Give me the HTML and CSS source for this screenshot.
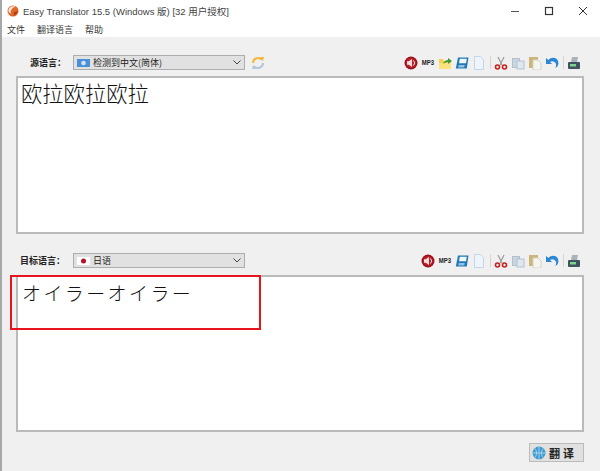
FILE: index.html
```html
<!DOCTYPE html>
<html lang="zh">
<head>
<meta charset="utf-8">
<title>Easy Translator</title>
<link rel="stylesheet" href="styles.css">
</head>
<body>
<svg class="defs" width="0" height="0">
  <symbol id="i-speaker" viewBox="0 0 14 14"><circle cx="7" cy="7" r="6.5" fill="#9c111b"/><circle cx="7" cy="7" r="5" fill="#b8202a"/><path d="M3 5.200h1.800L8 3v8L4.800 8.800H3z" fill="#f6dede"/><path d="M9.500 4.500a3.500 3.500 0 0 1 0 5" fill="none" stroke="#f6dede"/></symbol>
  <symbol id="i-folder" viewBox="0 0 14 14"><path d="M1 3h4l1 2h7v8H1z" fill="#f6cf52"/><path d="M1 7h12v6H1z" fill="#fbe27f"/><path d="M5 8c1-3 3-4 5-4V2l4 3-4 3V6C8 6 6 7 5 8z" fill="#3f9a35"/></symbol>
  <symbol id="i-save" viewBox="0 0 14 14"><path d="M3 1.500h10.500L11.800 12.500H.8z" fill="#2078b4"/><path d="M4.800 2.800h7L11 7.200H4z" fill="#f0f7fc"/><path d="M3.700 9h6l-.5 2.600H3.200z" fill="#8fc2e4"/></symbol>
  <symbol id="i-doc" viewBox="0 0 14 14"><path d="M2.500.5h6l3 3v10h-9z" fill="#eef4fb" stroke="#c4d5e8"/></symbol>
  <symbol id="i-cut" viewBox="0 0 14 14"><path d="M4 1l4 8M10 1 6 9" stroke="#9a9a9a" stroke-width="1.200"/><circle cx="3.500" cy="11" r="2" fill="none" stroke="#c8201e" stroke-width="1.600"/><circle cx="10.500" cy="11" r="2" fill="none" stroke="#c8201e" stroke-width="1.600"/></symbol>
  <symbol id="i-copy" viewBox="0 0 14 14"><rect x="1.500" y="2.500" width="7" height="9" fill="#c9d6e2" stroke="#b4c1cd"/><rect x="6" y="5" width="7" height="8" fill="#dfe7ef" stroke="#b4c1cd"/></symbol>
  <symbol id="i-paste" viewBox="0 0 14 14"><rect x="1" y="1" width="9" height="11" fill="#cdb47a"/><path d="M5 4h5l3 3v7H5z" fill="#f5f5f0" stroke="#d2d2c8"/></symbol>
  <symbol id="i-undo" viewBox="0 0 14 14"><path d="M1 2v6h6L5 6c2-1.500 5-1 6 2 .4 1.500 0 3-1 4 3-1 4-4 3-7C11.500 1 6 1 3.500 4z" fill="#2b87d3"/></symbol>
  <symbol id="i-print" viewBox="0 0 14 14"><path d="M5 1h6l-1 5H4z" fill="#a9b3ba"/><rect x="1" y="6" width="12" height="7" rx="1" fill="#3e5360"/><rect x="3" y="8" width="6" height="2.500" fill="#7fd38a"/></symbol>
</svg>
<div class="window">
  <header class="titlebar">
    <svg class="app-icon" viewBox="0 0 12 12" width="12" height="12"><circle cx="6" cy="6" r="5.500" fill="#e2672b"/><path d="M1.500 4.500C2.500 1.500 6 .5 8.500 1.500 7 2 6 2.500 5 4c-1 1-2 2.500-1 4.500C2 8 1 6 1.500 4.500z" fill="#fbe8da"/><path d="M7 7a3 3 0 0 0 3.500-2C11 8 8.500 10.500 6 10.500 7 9.500 7.500 8.500 7 7z" fill="#a93c12"/></svg>
    <span class="title">Easy Translator 15.5 (Windows 版) [32 用户授权]</span>
    <div class="caption">
      <svg width="34" height="20" viewBox="0 0 34 20"><path d="M13 10.500h8" stroke="#555"/></svg>
      <svg width="34" height="20" viewBox="0 0 34 20"><rect x="13.500" y="6.500" width="7" height="7" fill="none" stroke="#333" stroke-width="1.200"/></svg>
      <svg width="34" height="20" viewBox="0 0 34 20"><path d="M13 6l8 8M21 6l-8 8" stroke="#333"/></svg>
    </div>
  </header>
  <nav class="menubar"><span>文件</span><span>翻译语言</span><span>帮助</span></nav>
  <main class="client">
    <section class="pane pane-source">
      <div class="toolbar">
        <label class="lang-label lang-label-source">源语言：</label>
        <div class="select">
          <svg class="flag" viewBox="0 0 13 8" width="13" height="8"><rect width="13" height="8" fill="#4a90d9"/><circle cx="6.500" cy="4" r="2.300" fill="#cfe3f6"/></svg>
          <span class="select-text">检测到中文(简体)</span>
          <svg class="chev" viewBox="0 0 8 5" width="8" height="5"><path d="M.5.5 4 4 7.500.5" fill="none" stroke="#444"/></svg>
        </div>
        <svg class="swap" viewBox="0 0 14 14" width="14" height="14"><path d="M2 7a5 5 0 0 1 9-3" fill="none" stroke="#f0b93c" stroke-width="2"/><path d="M12 7a5 5 0 0 1-9 3" fill="none" stroke="#b5c6dc" stroke-width="2"/><path d="M9 1h4l-1 4z" fill="#f0b93c"/><path d="M5 13H1l1-4z" fill="#b5c6dc"/></svg>
        <div class="tools">
          <svg class="ico"><use href="#i-speaker"/></svg>
          <span class="mp3">MP3</span>
          <svg class="ico"><use href="#i-folder"/></svg>
          <svg class="ico"><use href="#i-save"/></svg>
          <svg class="ico"><use href="#i-doc"/></svg>
          <i class="sep"></i>
          <svg class="ico"><use href="#i-cut"/></svg>
          <svg class="ico"><use href="#i-copy"/></svg>
          <svg class="ico"><use href="#i-paste"/></svg>
          <svg class="ico"><use href="#i-undo"/></svg>
          <i class="sep"></i>
          <svg class="ico"><use href="#i-print"/></svg>
        </div>
      </div>
      <div class="editor editor-source">欧拉欧拉欧拉</div>
    </section>
    <section class="pane pane-target">
      <div class="toolbar">
        <label class="lang-label lang-label-target">目标语言：</label>
        <div class="select">
          <svg class="flag" viewBox="0 0 13 8" width="13" height="8"><rect width="13" height="8" fill="#fff"/><circle cx="6.500" cy="4" r="2.500" fill="#bc0f2c"/></svg>
          <span class="select-text">日语</span>
          <svg class="chev" viewBox="0 0 8 5" width="8" height="5"><path d="M.5.5 4 4 7.500.5" fill="none" stroke="#444"/></svg>
        </div>
        <div class="tools">
          <svg class="ico"><use href="#i-speaker"/></svg>
          <span class="mp3">MP3</span>
          <svg class="ico"><use href="#i-save"/></svg>
          <svg class="ico"><use href="#i-doc"/></svg>
          <i class="sep"></i>
          <svg class="ico"><use href="#i-cut"/></svg>
          <svg class="ico"><use href="#i-copy"/></svg>
          <svg class="ico"><use href="#i-paste"/></svg>
          <svg class="ico"><use href="#i-undo"/></svg>
          <i class="sep"></i>
          <svg class="ico"><use href="#i-print"/></svg>
        </div>
      </div>
      <div class="editor editor-target">
        <span class="jp">オイラーオイラー</span>
        <div class="highlight"></div>
      </div>
    </section>
    <footer class="actions">
      <button class="translate">
        <svg viewBox="0 0 14 14" width="14" height="14"><circle cx="7" cy="7" r="6.500" fill="#3f9ad0"/><path d="M.5 7h13M7 .5v13M3 2.500c2 3 2 6 0 9M11 2.500c-2 3-2 6 0 9" fill="none" stroke="#bfe0f2" stroke-width=".8"/></svg>
        <span>翻译</span>
      </button>
    </footer>
  </main>
</div>
</body>
</html>
```
FILE: styles.css
```css
* { box-sizing: border-box; }
html, body { margin: 0; height: 100%; }
body { font-family: "Noto Sans CJK SC", "Liberation Sans", sans-serif; color: #222; background: #f0f0f0; overflow: hidden; }
.defs { position: absolute; }
.window { width: 600px; height: 471px; display: flex; flex-direction: column; border-left: 2px solid #a8a8a8; background: #f0f0f0; }
.titlebar { height: 22px; background: #fff; display: flex; align-items: center; padding-left: 5px; flex: none; }
.app-icon { flex: none; }
.title { font-family: "Liberation Sans", "Noto Sans CJK SC", sans-serif; font-size: 9.5px; margin-left: 4px; color: #444; white-space: nowrap; }
.caption { margin-left: auto; display: flex; }
.menubar { height: 15px; background: #fff; display: flex; gap: 12px; padding-left: 5px; font-size: 9px; line-height: 15px; flex: none; color: #333; }
.client { flex: 1; display: flex; flex-direction: column; padding: 0 16px 0 14px; min-height: 0; }
.pane { display: flex; flex-direction: column; flex: none; }
.toolbar { display: flex; align-items: center; height: 15px; flex: none; }
.pane-source .toolbar { margin-top: 18px; }
.pane-target .toolbar { margin-top: 19px; }
.lang-label { width: 57px; font-size: 9px; font-weight: 700; white-space: nowrap; flex: none; }
.lang-label-source { padding-left: 14px; }
.lang-label-target { padding-left: 4px; }
.select { width: 172px; height: 15px; background: #e1e1e1; border: 1px solid #adadad; display: flex; align-items: center; padding: 0 3px; flex: none; font-size: 9px; }
.flag { flex: none; }
.select-text { margin-left: 3px; }
.chev { margin-left: auto; flex: none; }
.swap { margin-left: 6px; flex: none; }
.tools { margin-left: auto; display: flex; align-items: center; gap: 3px; margin-right: 3px; }
.ico { width: 14px; height: 14px; flex: none; display: block; }
.mp3 { font-family: "Liberation Sans", sans-serif; font-size: 7.5px; font-weight: 700; color: #222; width: 14px; display: flex; justify-content: center; transform: scaleX(.8); white-space: nowrap; }
.sep { width: 1px; height: 13px; background: #d5d5d5; margin: 0 .5px; }
.editor { background: #fff; border: 2px solid #bababa; flex: none; position: relative; }
.editor-source { height: 158px; margin-top: 6px; padding: 0 3px; font-size: 21.3px; line-height: 30px; color: #111; font-weight: 300; }
.editor-target { height: 157px; margin-top: 7px; padding: 1px 4px; }
.jp { font-size: 19px; line-height: 30px; letter-spacing: 2.4px; color: #111; font-family: "Noto Sans CJK JP", sans-serif; font-weight: 300; }
.highlight { position: absolute; left: -8px; top: -2px; width: 251px; height: 55px; border: 2px solid #e8141c; }
.actions { display: flex; justify-content: flex-end; padding-top: 11px; }
.translate { width: 55px; height: 19px; display: flex; align-items: center; gap: 3px; padding: 0 0 0 2px; background: #e1e1e1; border: 1px solid #bbb; font-family: "Noto Sans CJK SC", sans-serif; font-size: 11px; font-weight: 700; letter-spacing: 3px; color: #222; }
```
